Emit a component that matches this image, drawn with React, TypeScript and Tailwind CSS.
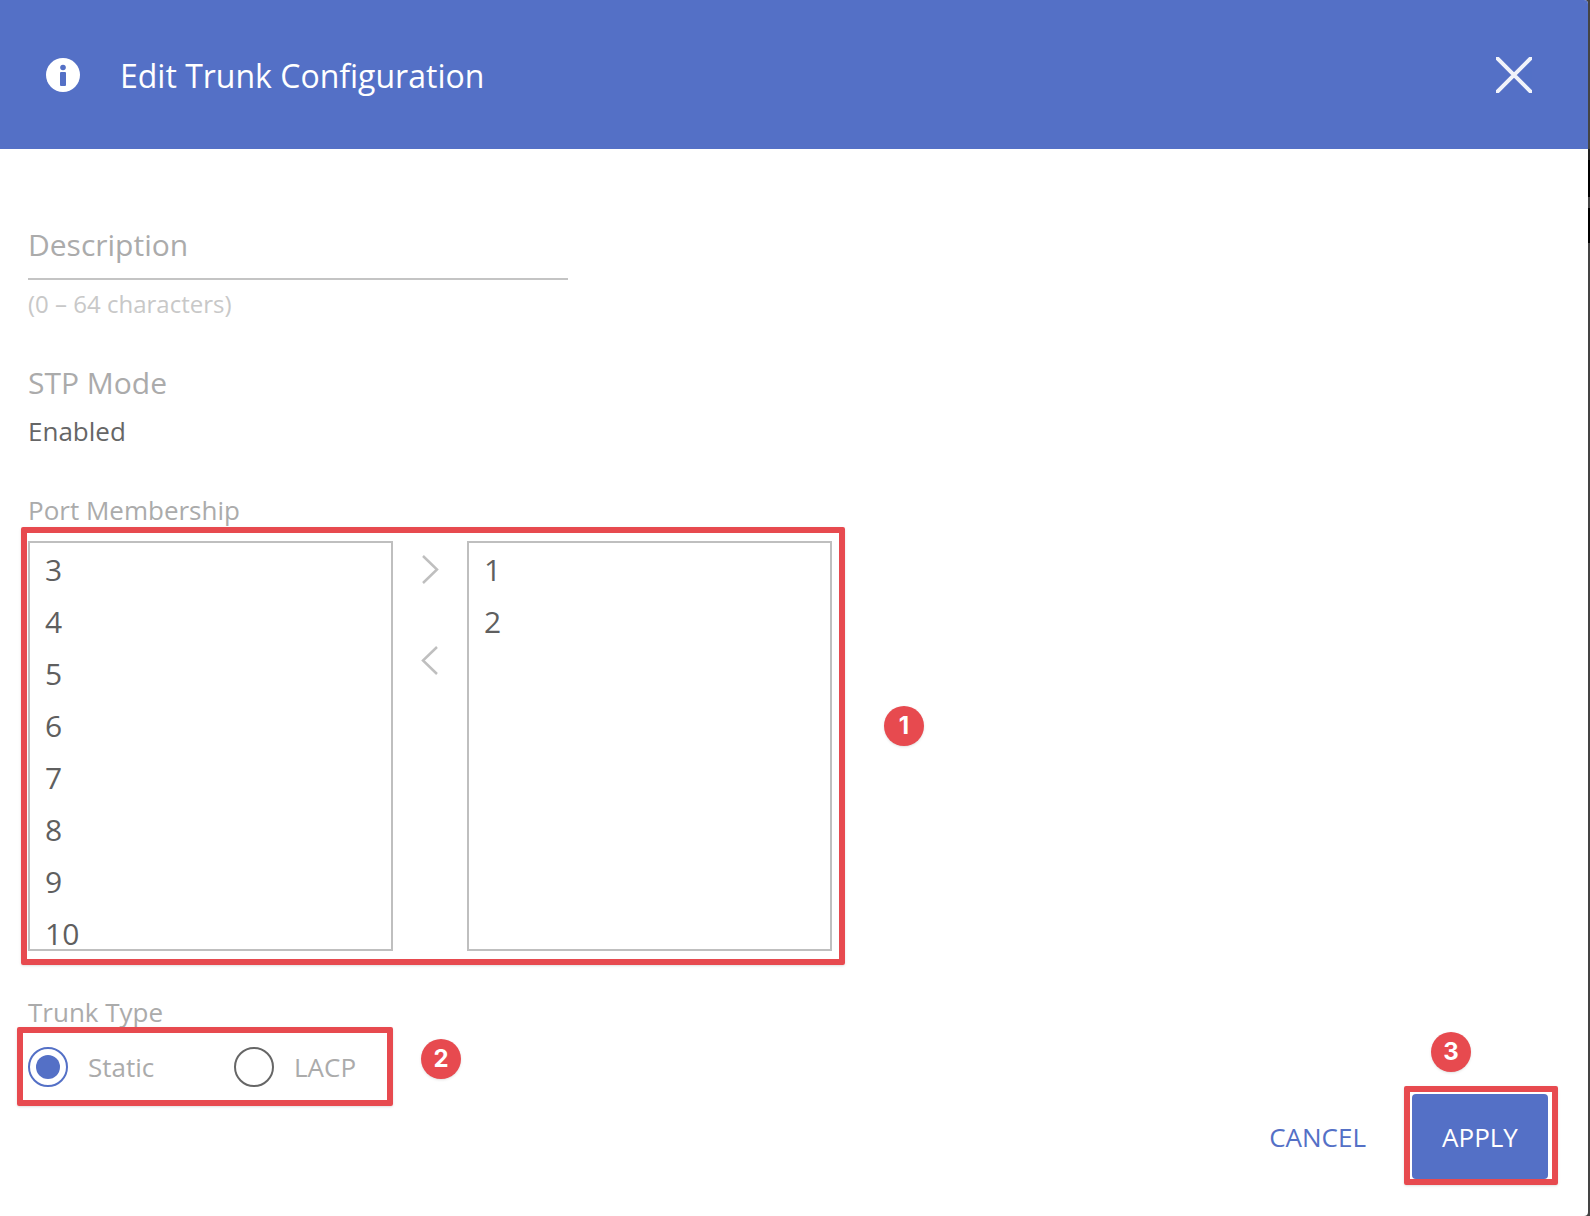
const leftPorts = ["3", "4", "5", "6", "7", "8", "9", "10"];
const rightPorts = ["1", "2"];

const PortList = ({ ports }: { ports: string[] }) => {
  return (
    <div className="w-[365px] h-[410px] border-2 border-[#bfbfbf] overflow-hidden pl-[15px] pt-[1px] shrink-0">
      {ports.map((p) => (
        <div key={p} className="h-[52px] leading-[52px] text-[30px] text-[#5f5f5f]">
          {p}
        </div>
      ))}
    </div>
  );
};

const Badge = ({ n, className }: { n: string; className: string }) => {
  return (
    <div
      className={`absolute w-10 h-10 rounded-full bg-[#e74a4f] shadow-sm flex items-center justify-center text-white text-[24px] font-bold font-['Inter',sans-serif] ${className}`}
    >
      {n}
    </div>
  );
};

const App = () => {
  return (
    <div className="relative w-[1590px] h-[1216px] bg-[#444444] overflow-hidden font-['Open_Sans',sans-serif]">
      {/* window behind the dialog, only a sliver shows */}
      <div className="absolute right-0 top-[149px] w-[2px] h-[11px] bg-[#222222]" />
      <div className="absolute right-0 top-[160px] w-[2px] h-[37px] bg-black" />
      <div className="absolute right-0 top-[208px] w-[2px] h-[35px] bg-black" />

      <div className="relative w-[1588px] h-[1216px] bg-white rounded-r-[4px] overflow-hidden">
        <div className="h-[149px] bg-[#5470c6] flex items-center pl-[46px] pr-[56px] text-white">
          <svg className="w-[34px] h-[34px]" viewBox="0 0 34 34">
            <circle cx="17" cy="17" r="17" fill="#ffffff" />
            <circle cx="17" cy="9.5" r="2.8" fill="#5470c6" />
            <rect x="14" y="14" width="6" height="14" rx="1" fill="#5470c6" />
          </svg>
          <span className="ml-[40px] text-[32px] leading-none mt-[3px]">Edit Trunk Configuration</span>
          <svg className="ml-auto w-[36px] h-[36px]" viewBox="0 0 36 36">
            <path d="M0 0L36 36M36 0L0 36" stroke="#ffffff" strokeWidth={4} opacity={0.92} />
          </svg>
        </div>

        <div className="pl-[28px] pt-[76px]">
          <div className="w-[540px] h-[55px] border-b-2 border-[#c4c4c4] text-[30px] leading-[40px] text-[#ababab]">
            Description
          </div>
          <div className="mt-[10px] text-[24px] leading-[28px] text-[#c8c8c8]">(0 – 64 characters)</div>

          <div className="mt-[45px] text-[30px] leading-[40px] text-[#ababab]">STP Mode</div>
          <div className="mt-[11px] text-[26px] leading-[34px] text-[#666666]">Enabled</div>

          <div className="mt-[45px] text-[26px] leading-[34px] text-[#ababab]">Port Membership</div>
          <div className="mt-[14px] flex">
            <PortList ports={leftPorts} />
            <div className="w-[74px] flex flex-col items-center pt-[14px] shrink-0">
              <svg className="w-[18px] h-[29px]" viewBox="0 0 18 29" fill="none">
                <path d="M2 1L16 14.5L2 28" stroke="#bfbfbf" strokeWidth={2.5} />
              </svg>
              <svg className="mt-[62px] w-[18px] h-[29px]" viewBox="0 0 18 29" fill="none">
                <path d="M16 1L2 14.5L16 28" stroke="#bfbfbf" strokeWidth={2.5} />
              </svg>
            </div>
            <PortList ports={rightPorts} />
          </div>

          <div className="mt-[44px] text-[26px] leading-[34px] text-[#ababab]">Trunk Type</div>
          <div className="mt-[18px] flex items-center text-[26px] text-[#ababab]">
            <div className="w-10 h-10 rounded-full border-2 border-[#5470c6] flex items-center justify-center">
              <div className="w-6 h-6 rounded-full bg-[#5470c6]" />
            </div>
            <span className="ml-[20px] w-[146px]">Static</span>
            <div className="w-10 h-10 rounded-full border-2 border-[#666666]" />
            <span className="ml-[20px]">LACP</span>
          </div>
        </div>

        <div className="absolute right-[40px] bottom-[37px] flex items-center">
          <button className="text-[26px] text-[#5470c6] mr-[46px] pt-[2px]">CANCEL</button>
          <button className="w-[136px] h-[85px] pt-[2px] bg-[#5470c6] rounded-[4px] text-white text-[26px]">APPLY</button>
        </div>
      </div>

      {/* red annotation boxes */}
      <div className="absolute left-[21px] top-[527px] w-[824px] h-[438px] border-[6px] border-[#e74a4f] rounded-[2px] shadow-sm" />
      <div className="absolute left-[17px] top-[1027px] w-[376px] h-[79px] border-[6px] border-[#e74a4f] rounded-[2px] shadow-sm" />
      <div className="absolute left-[1404px] top-[1086px] w-[154px] h-[99px] border-[6px] border-[#e74a4f] rounded-[2px] shadow-sm" />

      <Badge n="1" className="left-[884px] top-[706px]" />
      <Badge n="2" className="left-[421px] top-[1039px]" />
      <Badge n="3" className="left-[1431px] top-[1032px]" />
    </div>
  );
};

export default App;
